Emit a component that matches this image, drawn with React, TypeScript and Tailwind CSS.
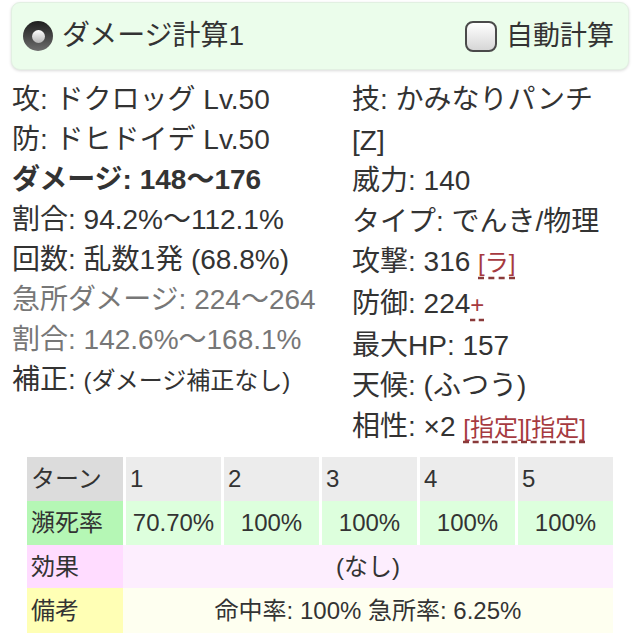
import React from 'react';

const font = "font-['Liberation_Sans','Noto_Sans_CJK_JP',sans-serif]";

function Radio() {
  return (
    <span className="flex h-[30px] w-[30px] items-center justify-center rounded-full bg-linear-to-b from-[#1f1f1f] to-[#6e6e6e]">
      <span className="h-[13px] w-[13px] rounded-full bg-linear-to-b from-white to-[#b5b5b5]" />
    </span>
  );
}

function Checkbox() {
  return (
    <span className="h-[31px] w-[32px] rounded-[8px] border-2 border-[#4a4a4a] bg-linear-to-b from-white to-[#d6d6d6]" />
  );
}

function Link({ children, small = true }: { children: React.ReactNode; small?: boolean }) {
  return (
    <span
      className={`${small ? 'text-[24px]' : ''} text-[#a63a40] underline decoration-dashed decoration-[#8a3a3a] underline-offset-[6px]`}
    >
      {children}
    </span>
  );
}

const turns = ['1', '2', '3', '4', '5'];
const rates = ['70.70%', '100%', '100%', '100%', '100%'];

export default function App() {
  return (
    <div className={`h-[640px] w-[640px] overflow-hidden bg-white text-[#333] ${font}`}>
      <div className="px-[11px] pt-[2px]">
        <div className="flex h-[68px] items-center justify-between rounded-[9px] border border-[#e2f0e2] bg-[#ebfdeb] pl-[11px] pr-[14px] shadow-[0_1px_3px_rgba(0,0,0,0.15)]">
          <div className="flex items-center gap-[9px] text-[28px]">
            <Radio />
            <span>ダメージ計算1</span>
          </div>
          <div className="flex items-center gap-[9px] text-[27px]">
            <Checkbox />
            <span>自動計算</span>
          </div>
        </div>
      </div>

      <div className="mt-[10px] grid grid-cols-[340px_1fr] items-start px-[12px] text-[28px]">
        <div className="leading-[40px]">
          <div>攻: ドクロッグ Lv.50</div>
          <div>防: ドヒドイデ Lv.50</div>
          <div className="font-bold">ダメージ: 148～176</div>
          <div>割合: 94.2%～112.1%</div>
          <div>回数: 乱数1発 (68.8%)</div>
          <div className="text-[#777]">急所ダメージ: 224～264</div>
          <div className="text-[#777]">割合: 142.6%～168.1%</div>
          <div>
            補正: <span className="text-[24px]">(ダメージ補正なし)</span>
          </div>
        </div>
        <div className="leading-[40.6px]">
          <div>技: かみなりパンチ</div>
          <div>[Z]</div>
          <div>威力: 140</div>
          <div>タイプ: でんき/物理</div>
          <div>
            攻撃: 316 <Link>[ラ]</Link>
          </div>
          <div>
            防御: 224<Link>+</Link>
          </div>
          <div>最大HP: 157</div>
          <div>天候: (ふつう)</div>
          <div>
            相性: ×2 <Link>[指定][指定]</Link>
          </div>
        </div>
      </div>

      <div className="ml-[27px] mt-[9px] grid w-[586px] grid-cols-[96px_repeat(5,95px)] gap-x-[3px] text-[24px]">
        <div className="flex h-[44px] items-center bg-[#dcdcdc] px-[4px]">ターン</div>
        {turns.map((t) => (
          <div key={t} className="flex h-[44px] items-center bg-[#ececec] px-[4px]">
            {t}
          </div>
        ))}

        <div className="flex h-[44px] items-center bg-[#b5f7b5] px-[4px]">瀕死率</div>
        {rates.map((r, i) => (
          <div key={i} className="flex h-[44px] items-center justify-center bg-[#ddffdd]">
            {r}
          </div>
        ))}

        <div className="flex h-[43px] items-center bg-[#ffdcff] px-[4px]">効果</div>
        <div className="col-span-5 -ml-[3px] flex h-[43px] items-center justify-center bg-[#fdeefe]">(なし)</div>

        <div className="flex h-[45px] items-center bg-[#ffffb5] px-[4px]">備考</div>
        <div className="col-span-5 -ml-[3px] flex h-[45px] items-center justify-center bg-[#fefff0]">
          命中率: 100% 急所率: 6.25%
        </div>
      </div>
    </div>
  );
}
